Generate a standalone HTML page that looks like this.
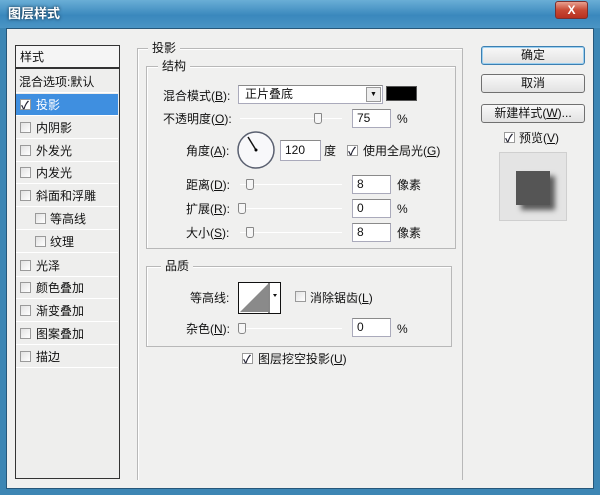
<!DOCTYPE html>
<html><head><meta charset="utf-8"><style>
*{margin:0;padding:0;box-sizing:border-box}
body{width:600px;height:495px;overflow:hidden;background:#3d86b4;font-family:"Liberation Sans","Noto Sans CJK SC",sans-serif;font-size:12px;color:#111;position:relative}
.a{position:absolute}
#title{left:0;top:0;width:600px;height:28px;background:linear-gradient(180deg,#6aaed6,#3a88bd 55%,#4a94c4);}
#client{left:6px;top:28px;width:588px;height:461px;background:#f0f0ef;border:1px solid #26577a}
.t{position:absolute;white-space:nowrap;line-height:14px}
.cb{position:absolute;width:11px;height:11px;border:1px solid #9a9a9a;background:linear-gradient(135deg,#e2e2e2,#fff)}
.cb.on::after{content:"✓";position:absolute;left:0px;top:-3px;font-size:11px;color:#223;font-weight:bold}
.inp{position:absolute;height:19px;background:#fff;border:1px solid #aab;border-top-color:#8a8a8a;padding-left:4px;line-height:17px}
.sl{position:absolute;height:1px;background:#a0a0a0;border-bottom:1px solid #fff}
.th{position:absolute;width:8px;height:11px;background:#f6f6f6;border:1px solid #888;border-radius:1px 1px 3px 3px}
.fs{position:absolute;border:1px solid #b8b8b8;box-shadow:1px 1px 0 #fff inset}
.lg{position:absolute;background:#f0f0ef;padding:0 4px;line-height:14px}
.btn{position:absolute;left:481px;width:104px;height:19px;border:1px solid #707070;border-radius:3px;background:linear-gradient(#f8f8f8,#e2e2e2);text-align:center;line-height:17px}
.row{position:absolute;left:16px;width:102px;height:22px;border-bottom:1px solid #fff;line-height:22px}
u{text-decoration:underline}
</style></head><body>
<div id="title" class="a"></div>
<div class="t" style="left:8px;top:7px;color:#fff;font-weight:bold;font-size:13px;text-shadow:0 0 3px #123">图层样式</div>
<div class="a" style="left:555px;top:1px;width:33px;height:18px;border:1px solid #7a3030;border-radius:3px;background:linear-gradient(#e8a090,#c84a35 50%,#b83020);color:#fff;text-align:center;font-weight:bold;line-height:16px;font-size:12px">X</div>
<div id="client" class="a"></div>

<div class="a" style="left:15px;top:45px;width:105px;height:434px;border:1px solid #333;background:#eeeeed"></div>
<div class="a" style="left:16px;top:46px;width:103px;height:23px;border-bottom:2px solid #333;background:#f5f5f5;line-height:22px;padding-left:4px">样式</div>
<div class="row" style="top:71px;padding-left:3px">混合选项:默认</div>
<div class="row" style="top:94px;background:#3f8fe0;color:#fff;padding-left:20px">投影</div>
<div class="cb on" style="left:20px;top:99px;background:#fff"></div>
<div class="row" style="top:117px;padding-left:20px">内阴影</div><div class="cb" style="left:20px;top:122px"></div>
<div class="row" style="top:140px;padding-left:20px">外发光</div><div class="cb" style="left:20px;top:145px"></div>
<div class="row" style="top:162px;padding-left:20px">内发光</div><div class="cb" style="left:20px;top:167px"></div>
<div class="row" style="top:185px;padding-left:20px">斜面和浮雕</div><div class="cb" style="left:20px;top:190px"></div>
<div class="row" style="top:208px;padding-left:34px">等高线</div><div class="cb" style="left:35px;top:213px"></div>
<div class="row" style="top:231px;padding-left:34px">纹理</div><div class="cb" style="left:35px;top:236px"></div>
<div class="row" style="top:255px;padding-left:20px">光泽</div><div class="cb" style="left:20px;top:260px"></div>
<div class="row" style="top:277px;padding-left:20px">颜色叠加</div><div class="cb" style="left:20px;top:282px"></div>
<div class="row" style="top:300px;padding-left:20px">渐变叠加</div><div class="cb" style="left:20px;top:305px"></div>
<div class="row" style="top:323px;padding-left:20px">图案叠加</div><div class="cb" style="left:20px;top:328px"></div>
<div class="row" style="top:346px;padding-left:20px">描边</div><div class="cb" style="left:20px;top:351px"></div>

<div class="fs" style="left:137px;top:48px;width:326px;height:432px;border-bottom:none"></div>
<div class="lg" style="left:148px;top:41px">投影</div>
<div class="fs" style="left:146px;top:66px;width:310px;height:183px"></div>
<div class="lg" style="left:158px;top:59px">结构</div>

<div class="t" style="left:163px;top:89px">混合模式(<u>B</u>):</div>
<div class="inp" style="left:238px;top:85px;width:145px;padding-left:6px">正片叠底</div>
<div class="a" style="left:366px;top:87px;width:15px;height:15px;border:1px solid #999;background:#eee;font-size:7px;text-align:center;line-height:14px">▼</div>
<div class="a" style="left:386px;top:86px;width:31px;height:15px;background:#000;border:1px solid #555"></div>

<div class="t" style="left:163px;top:112px">不透明度(<u>O</u>):</div>
<div class="sl" style="left:240px;top:118px;width:102px"></div><div class="th" style="left:314px;top:113px"></div>
<div class="inp" style="left:352px;top:109px;width:39px">75</div><div class="t" style="left:397px;top:112px">%</div>

<div class="t" style="left:186px;top:144px">角度(<u>A</u>):</div>
<svg class="a" style="left:236px;top:130px" width="40" height="40"><circle cx="20" cy="20" r="18" fill="#f8f8fa" stroke="#5a6070" stroke-width="1.5"/><line x1="20" y1="20" x2="12" y2="7" stroke="#111" stroke-width="1.5"/><circle cx="20" cy="20" r="1.5" fill="#000"/></svg>
<div class="inp" style="left:280px;top:140px;width:41px;height:21px;line-height:19px">120</div>
<div class="t" style="left:324px;top:144px">度</div>
<div class="cb on" style="left:347px;top:145px;background:#fff"></div>
<div class="t" style="left:363px;top:144px">使用全局光(<u>G</u>)</div>

<div class="t" style="left:186px;top:178px">距离(<u>D</u>):</div>
<div class="sl" style="left:240px;top:184px;width:102px"></div><div class="th" style="left:246px;top:179px"></div>
<div class="inp" style="left:352px;top:175px;width:39px">8</div><div class="t" style="left:397px;top:178px">像素</div>

<div class="t" style="left:186px;top:202px">扩展(<u>R</u>):</div>
<div class="sl" style="left:240px;top:208px;width:102px"></div><div class="th" style="left:238px;top:203px"></div>
<div class="inp" style="left:352px;top:199px;width:39px">0</div><div class="t" style="left:397px;top:202px">%</div>

<div class="t" style="left:186px;top:226px">大小(<u>S</u>):</div>
<div class="sl" style="left:240px;top:232px;width:102px"></div><div class="th" style="left:246px;top:227px"></div>
<div class="inp" style="left:352px;top:223px;width:39px">8</div><div class="t" style="left:397px;top:226px">像素</div>

<div class="fs" style="left:146px;top:266px;width:306px;height:81px"></div>
<div class="lg" style="left:161px;top:259px">品质</div>
<div class="t" style="left:190px;top:291px">等高线:</div>
<svg class="a" style="left:238px;top:282px" width="43" height="32"><rect x="0.5" y="0.5" width="42" height="31" fill="#fff" stroke="#111"/><polygon points="2,30 30,2 30,30" fill="#8a8a8a"/><line x1="31" y1="1" x2="31" y2="31" stroke="#111"/><polygon points="35,12 39,12 37,15" fill="#111"/></svg>
<div class="cb" style="left:295px;top:291px"></div>
<div class="t" style="left:310px;top:291px">消除锯齿(<u>L</u>)</div>
<div class="t" style="left:186px;top:322px">杂色(<u>N</u>):</div>
<div class="sl" style="left:240px;top:328px;width:102px"></div><div class="th" style="left:238px;top:323px"></div>
<div class="inp" style="left:352px;top:318px;width:39px">0</div><div class="t" style="left:397px;top:322px">%</div>

<div class="cb on" style="left:242px;top:353px;background:#fff"></div>
<div class="t" style="left:258px;top:352px">图层挖空投影(<u>U</u>)</div>

<div class="btn" style="top:46px;border-color:#3c7fb1;box-shadow:0 0 0 1px #9cd0f0 inset">确定</div>
<div class="btn" style="top:74px">取消</div>
<div class="btn" style="top:104px">新建样式(<u>W</u>)...</div>
<div class="cb on" style="left:504px;top:132px;background:#fff"></div>
<div class="t" style="left:519px;top:131px">预览(<u>V</u>)</div>
<div class="a" style="left:499px;top:152px;width:68px;height:69px;background:#e4e4e4;border:1px solid #cfcfcf"></div>
<div class="a" style="left:516px;top:171px;width:34px;height:34px;background:#555;box-shadow:5px 5px 5px rgba(0,0,0,.6)"></div>
</body></html>
